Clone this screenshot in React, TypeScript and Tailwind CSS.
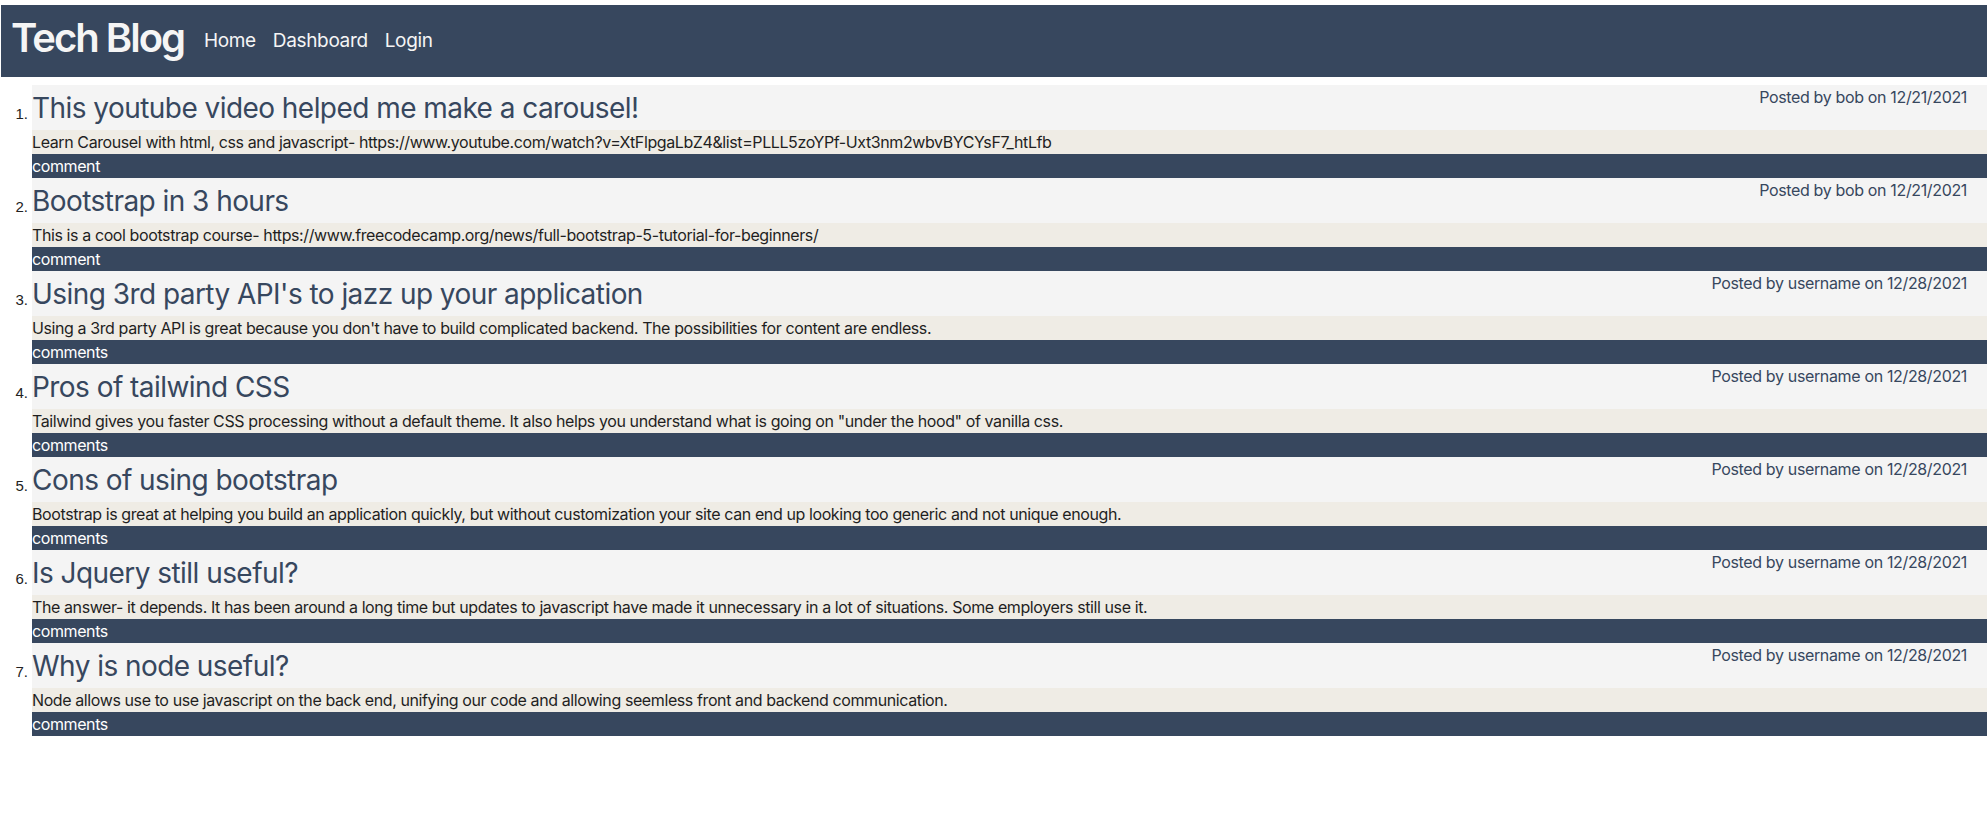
import React from "react";

// Post data
interface Post {
    id: number;
    title: string;
    body: string;
    author: string;
    date: string;
    label: string;
}

const posts: Post[] = [
    {
        id: 1,
        title: "This youtube video helped me make a carousel!",
        body: "Learn Carousel with html, css and javascript- https://www.youtube.com/watch?v=XtFlpgaLbZ4&list=PLLL5zoYPf-Uxt3nm2wbvBYCYsF7_htLfb",
        author: "bob",
        date: "12/21/2021",
        label: "comment",
    },
    {
        id: 2,
        title: "Bootstrap in 3 hours",
        body: "This is a cool bootstrap course- https://www.freecodecamp.org/news/full-bootstrap-5-tutorial-for-beginners/",
        author: "bob",
        date: "12/21/2021",
        label: "comment",
    },
    {
        id: 3,
        title: "Using 3rd party API's to jazz up your application",
        body: "Using a 3rd party API is great because you don't have to build complicated backend. The possibilities for content are endless.",
        author: "username",
        date: "12/28/2021",
        label: "comments",
    },
    {
        id: 4,
        title: "Pros of tailwind CSS",
        body: 'Tailwind gives you faster CSS processing without a default theme. It also helps you understand what is going on "under the hood" of vanilla css.',
        author: "username",
        date: "12/28/2021",
        label: "comments",
    },
    {
        id: 5,
        title: "Cons of using bootstrap",
        body: "Bootstrap is great at helping you build an application quickly, but without customization your site can end up looking too generic and not unique enough.",
        author: "username",
        date: "12/28/2021",
        label: "comments",
    },
    {
        id: 6,
        title: "Is Jquery still useful?",
        body: "The answer- it depends. It has been around a long time but updates to javascript have made it unnecessary in a lot of situations. Some employers still use it.",
        author: "username",
        date: "12/28/2021",
        label: "comments",
    },
    {
        id: 7,
        title: "Why is node useful?",
        body: "Node allows use to use javascript on the back end, unifying our code and allowing seemless front and backend communication.",
        author: "username",
        date: "12/28/2021",
        label: "comments",
    },
];

export default function App() {
    return (
        <div className="min-h-screen bg-white font-['Inter',sans-serif]">
            <header className="mt-[5px] ml-[1px] flex h-[72px] items-center bg-[#37475e] pb-[6px] pl-[10px] text-[#f5f5f5]">
                <h1 className="text-[40px] font-semibold tracking-[-2px]">
                    Tech Blog
                </h1>
                <nav className="ml-[20px] flex gap-[17px] pt-[6px] text-[19px] tracking-[-0.35px]">
                    <a href="#">Home</a>
                    <a href="#">Dashboard</a>
                    <a href="#">Login</a>
                </nav>
            </header>

            <ol className="mt-2">
                {posts.map((post, i) => (
                    <li key={post.id} className="flex">
                        <span className="flex h-[45px] w-8 shrink-0 items-end justify-end pb-[9px] pr-[4px] font-['Liberation_Sans',sans-serif] text-[15px] leading-none text-[#222]">
                            {i + 1}.
                        </span>
                        <div className="flex-1">
                            <div className="flex h-[45px] justify-between bg-[#f4f4f4] text-[#37475e]">
                                <h2 className="self-end pb-1 text-[28px] leading-9 tracking-[-0.55px]">
                                    {post.title}
                                </h2>
                                <p className="pr-5 text-base leading-6 tracking-[-0.35px]">
                                    Posted by {post.author} on {post.date}
                                </p>
                            </div>
                            <p className="bg-[#efece5] text-base leading-6 tracking-[-0.4px] text-[#1f1f1f]">
                                {post.body}
                            </p>
                            <div className="bg-[#37475e] text-base leading-6 tracking-[-0.4px] text-white">
                                {post.label}
                            </div>
                        </div>
                    </li>
                ))}
            </ol>
        </div>
    );
}
